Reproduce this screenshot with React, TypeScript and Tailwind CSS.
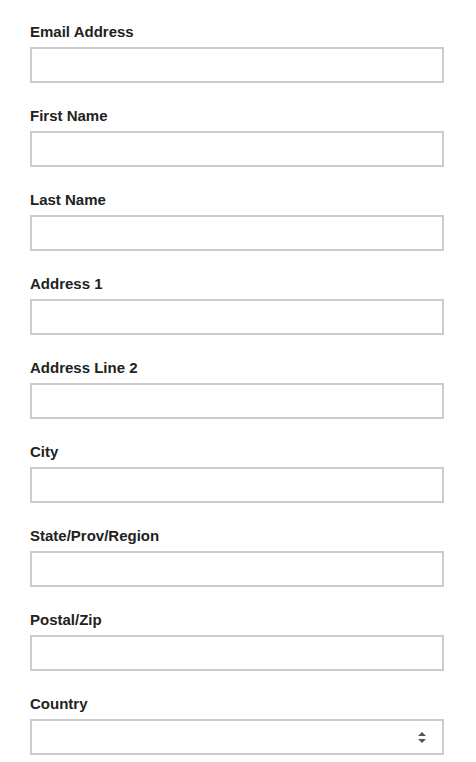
import React from "react";

const fields = [
  "Email Address",
  "First Name",
  "Last Name",
  "Address 1",
  "Address Line 2",
  "City",
  "State/Prov/Region",
  "Postal/Zip",
];

export default function App() {
  return (
    <div className="w-[476px] min-h-[762px] bg-white pt-[22px] pl-[30px] pr-[32px] font-['Liberation_Sans',Arial,sans-serif]">
      {fields.map((f) => (
        <div key={f} className="mb-[23px]">
          <label className="block text-[15px] leading-5 font-bold text-[#222] mb-[5px]">{f}</label>
          <input className="block w-full h-9 border-2 border-[#cccccc] bg-white outline-none" />
        </div>
      ))}
      <div>
        <label className="block text-[15px] leading-5 font-bold text-[#222] mb-[5px]">Country</label>
        <div className="relative h-9 w-full border-2 border-[#cccccc] bg-white">
          <svg className="absolute right-[16px] top-[11px]" width="8" height="11" viewBox="0 0 8 11">
            <path d="M4 0 L8 4 L0 4 Z" fill="#555" />
            <path d="M0 7 L8 7 L4 11 Z" fill="#555" />
          </svg>
        </div>
      </div>
    </div>
  );
}
